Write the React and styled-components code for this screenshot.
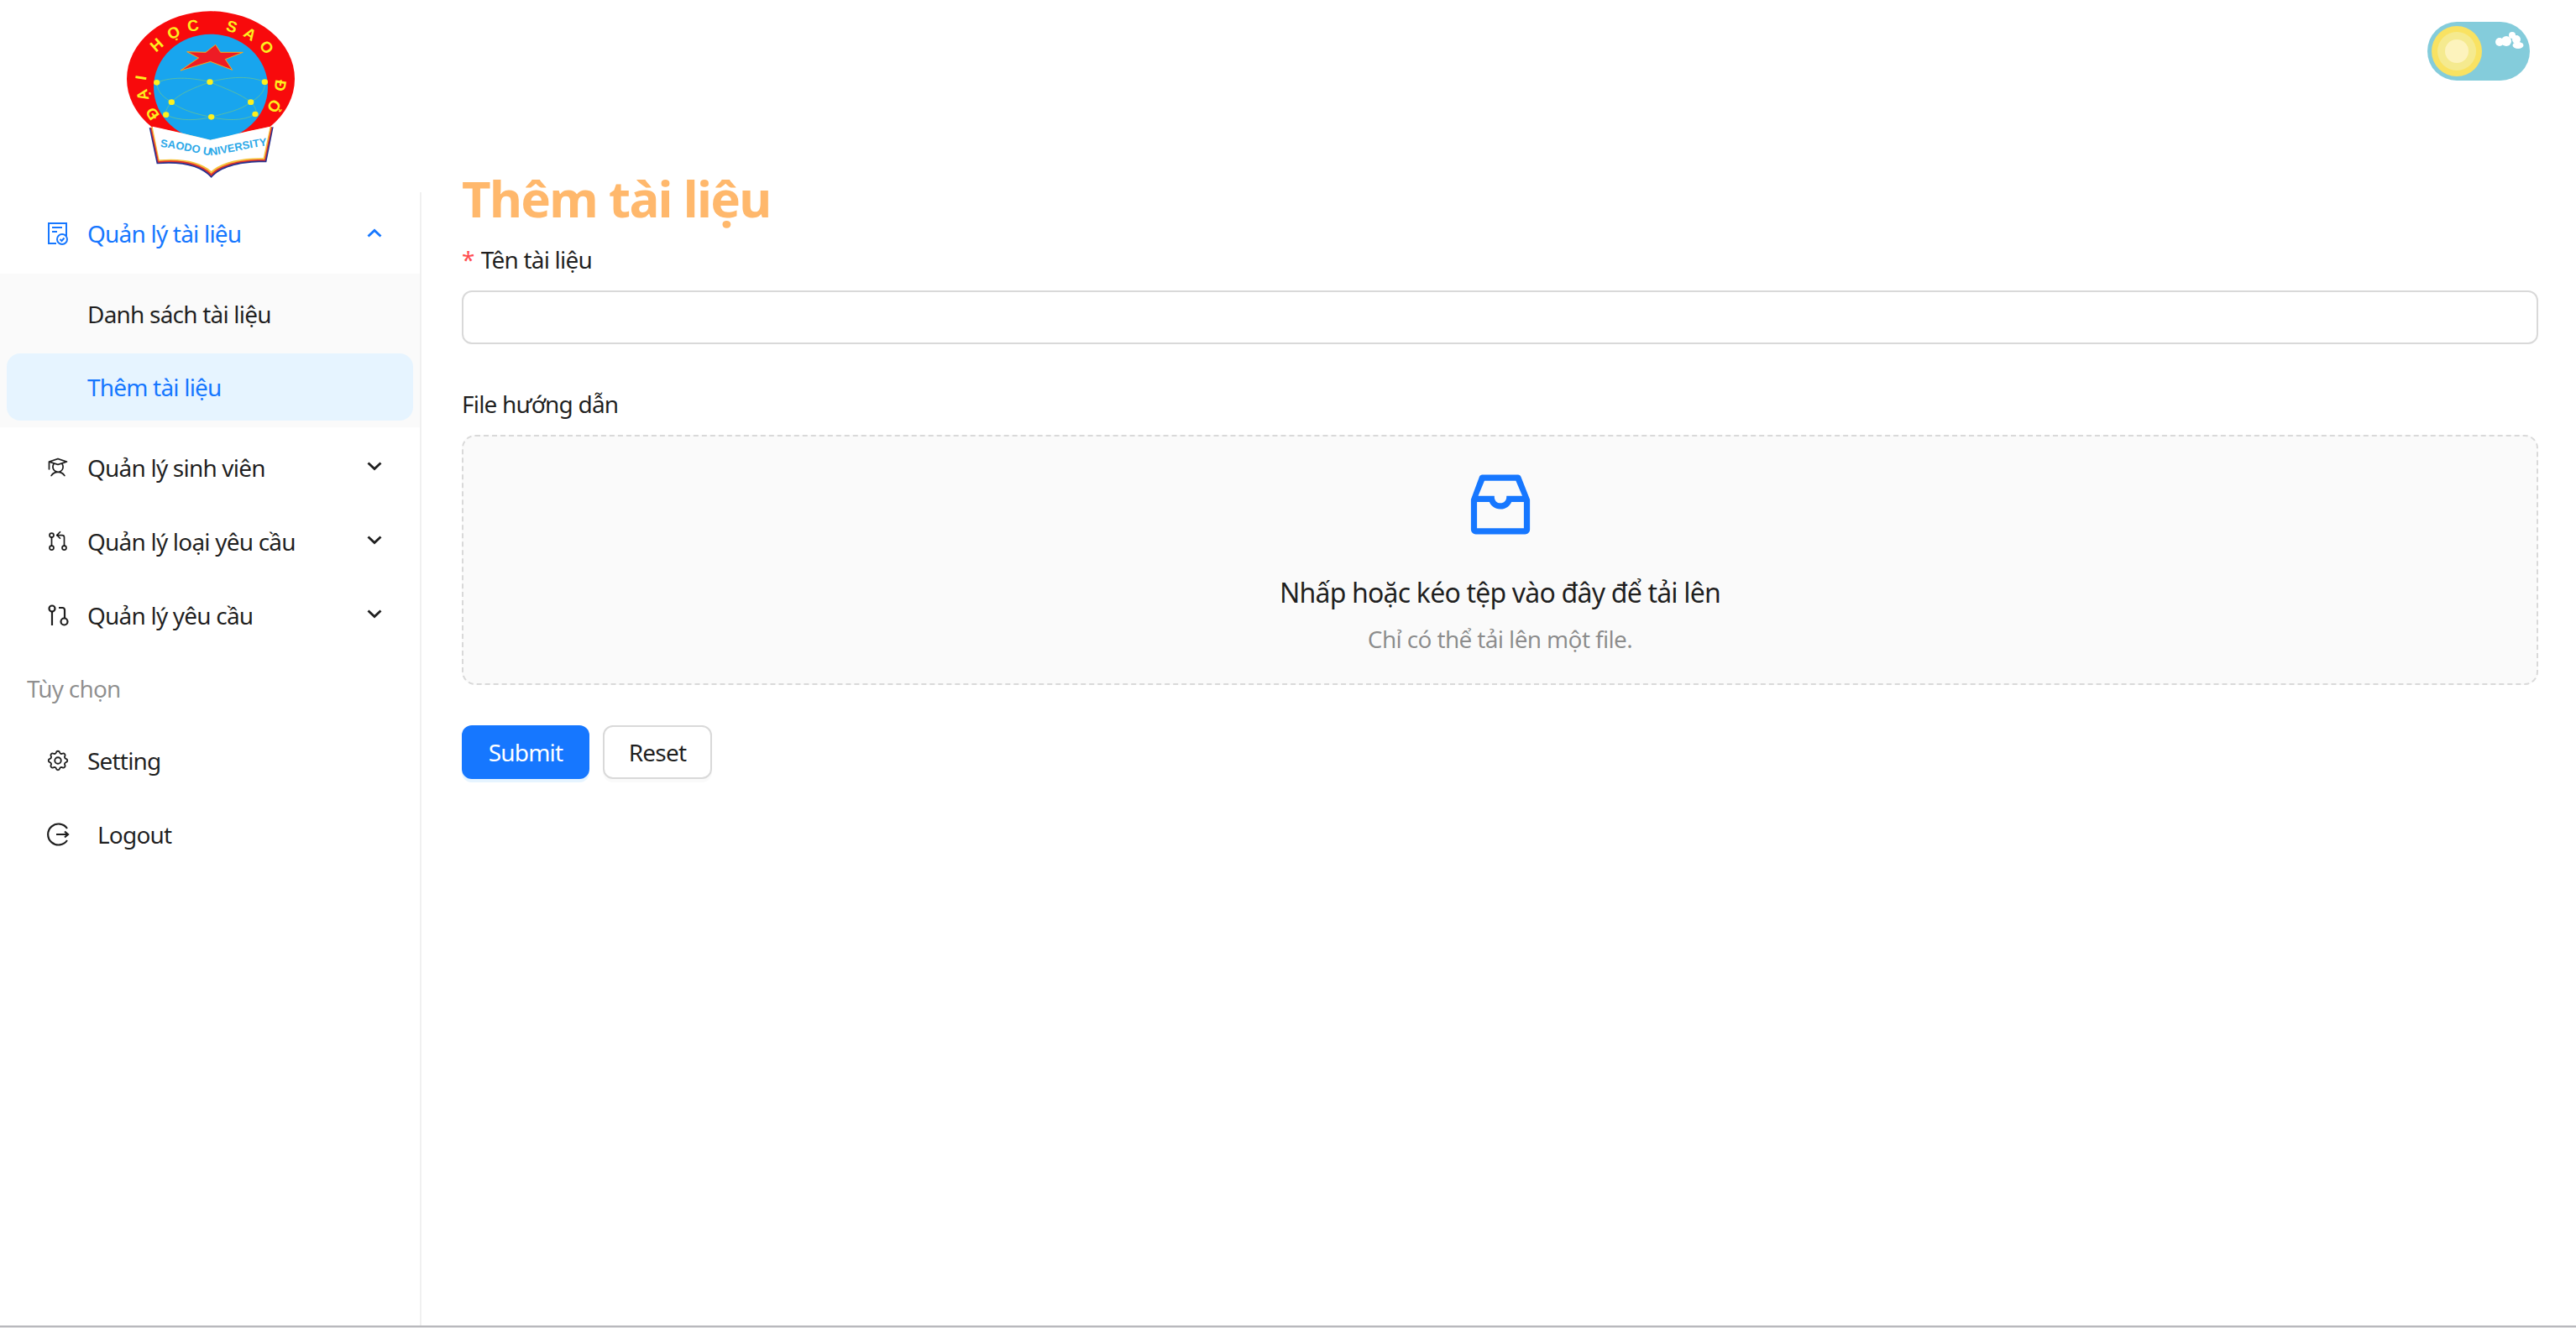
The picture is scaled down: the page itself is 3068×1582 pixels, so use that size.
import styled, { createGlobalStyle } from 'styled-components'
import { AiOutlineInbox } from 'react-icons/ai'
import { PiStudent } from 'react-icons/pi'
import { TbGitPullRequest, TbSettings } from 'react-icons/tb'

const GlobalStyle = createGlobalStyle`
  html, body {
    margin: 0;
    padding: 0;
    background: #fff;
  }
  body {
    font-family: 'Noto Sans', 'Liberation Sans', sans-serif;
    color: rgba(0, 0, 0, 0.88);
  }
  * {
    box-sizing: border-box;
  }
`

const Logo = () => (
  <LogoSvg viewBox='0 0 900 690'>
    <defs>
      <path id='ringPath' d='M274 410 A230 187 0 1 1 593 440' />
      <path id='bookPath' d='M272 525 C340 530 400 548 452 556 C510 548 580 530 642 522' />
    </defs>
    <ellipse cx='453' cy='282' rx='300' ry='242' fill='#f80a0c' />
    <ellipse cx='453' cy='312' rx='204' ry='190' fill='#18a5ee' />
    <g fill='none' stroke='#62c09a' strokeWidth='2.500'>
      <path d='M260 295 C320 270 400 280 450 293 C500 280 580 265 646 293' />
      <path d='M450 293 C390 315 340 335 313 365 C350 395 410 410 455 418 C500 405 560 395 596 365 C560 335 500 315 450 293' />
      <path d='M260 295 C262 335 290 350 313 365 C300 380 290 395 293 410' />
      <path d='M646 293 C650 330 620 350 596 365 C610 380 620 395 612 408' />
      <path d='M293 410 C340 435 410 430 455 418 C500 430 570 435 612 408' />
    </g>
    <polygon
      points='470,160 488,187 568,187 505,212 530,250 452,220 345,252 410,207 368,185 435,187'
      fill='#ee1c25'
      stroke='#f6a81c'
      strokeWidth='3'
    />
    <g fill='#fdf01e'>
      <ellipse cx='260' cy='295' rx='11' ry='10' />
      <ellipse cx='450' cy='293' rx='11' ry='10' />
      <ellipse cx='646' cy='293' rx='11' ry='10' />
      <ellipse cx='313' cy='365' rx='11' ry='10' />
      <ellipse cx='596' cy='365' rx='11' ry='10' />
      <ellipse cx='293' cy='410' rx='11' ry='10' />
      <ellipse cx='455' cy='418' rx='11' ry='10' />
      <ellipse cx='612' cy='408' rx='11' ry='10' />
    </g>
    <text fontFamily='Liberation Sans' fontWeight='700' fontSize='56' fill='#fdf01e' letterSpacing='27' wordSpacing='22'>
      <textPath href='#ringPath'>ĐẠI HỌC SAO ĐỎ</textPath>
    </text>
    <path d='M233 456 C310 470 390 490 452 505 C520 490 600 470 677 454 L652 580 C570 578 490 594 455 636 C420 594 350 578 260 586 Z' fill='#27318f' />
    <path d='M237 455 C310 468 390 488 452 503 C520 488 600 468 673 453 L648 575 C570 573 490 589 455 629 C420 589 350 573 264 581 Z' fill='#e0322c' />
    <path d='M241 454 C310 466 390 486 452 501 C520 486 600 466 669 452 L645 570 C570 568 490 584 455 621 C420 584 350 568 267 576 Z' fill='#f6c23c' />
    <path d='M245 452 C310 465 390 485 452 500 C520 485 600 465 665 452 L641 565 C570 563 490 578 455 612 C420 578 350 563 269 571 Z' fill='#fff' />
    <text fontFamily='Liberation Sans' fontWeight='700' fontSize='39' fill='#2ba8e8'>
      <textPath href='#bookPath'>SAODO UNIVERSITY</textPath>
    </text>
  </LogoSvg>
)

const ThemeToggle = () => (
  <svg width='122' height='70' viewBox='0 0 122 70'>
    <rect width='122' height='70' rx='35' fill='#84ccdb' />
    <circle cx='35' cy='35' r='30' fill='#f9e262' />
    <circle cx='35' cy='35' r='23' fill='#f5ea8f' />
    <circle cx='35' cy='35' r='14' fill='#fdf3bd' />
    <g fill='#fff'>
      <circle cx='86' cy='24' r='5' />
      <circle cx='94' cy='23' r='6' />
      <circle cx='101' cy='16' r='4' />
      <circle cx='106' cy='21' r='5' />
      <ellipse cx='108' cy='28' rx='6.500' ry='4' />
    </g>
  </svg>
)

const DocIcon = () => (
  <svg width='26' height='28' viewBox='0 0 26 28' fill='none' stroke='currentColor' strokeWidth='2'>
    <path d='M11 26H2V2h21v15' />
    <path d='M6 7h12M6 12h6' />
    <circle cx='18' cy='21' r='6' />
    <path d='M15.500 21l2 2 3-3.500' />
  </svg>
)

const RequestIcon = () => (
  <svg width='26' height='26' viewBox='0 0 26 26' fill='none' stroke='currentColor' strokeWidth='2.200'>
    <circle cx='6' cy='5' r='3.500' />
    <path d='M6 8.500V25' />
    <path d='M14 4h4.500a2.500 2.500 0 0 1 2.500 2.500V16' />
    <circle cx='20.500' cy='20.500' r='4' />
  </svg>
)

const LogoutIcon = () => (
  <svg width='28' height='28' viewBox='0 0 28 28' fill='none' stroke='currentColor' strokeWidth='2.200'>
    <path d='M25 7A12.500 12.500 0 1 0 25 21' />
    <path d='M12 14h14M22 10.500l4 3.500-4 3.500' />
  </svg>
)

const Chevron = ({ open }) => (
  <ChevronSvg viewBox='0 0 18 12' fill='none' stroke='currentColor' strokeWidth='2.800' $open={open}>
    <path d='M1.500 2.500L9 9.500l7.500-7' />
  </ChevronSvg>
)

const App = () => {
  return (
    <Page>
      <GlobalStyle />
      <Header>
        <LogoBox>
          <Logo />
        </LogoBox>
        <ThemeToggle />
      </Header>
      <Body>
        <Sider>
          <MenuItem $active>
            <IconSlot><DocIcon /></IconSlot>
            <Label>Quản lý tài liệu</Label>
            <Chevron open />
          </MenuItem>
          <SubMenu>
            <SubItem>Danh sách tài liệu</SubItem>
            <SubItem $selected>Thêm tài liệu</SubItem>
          </SubMenu>
          <MenuItem>
            <IconSlot><PiStudent size={28} /></IconSlot>
            <Label>Quản lý sinh viên</Label>
            <Chevron />
          </MenuItem>
          <MenuItem>
            <IconSlot><TbGitPullRequest size={32} strokeWidth={1.4} /></IconSlot>
            <Label>Quản lý loại yêu cầu</Label>
            <Chevron />
          </MenuItem>
          <MenuItem>
            <IconSlot><RequestIcon /></IconSlot>
            <Label>Quản lý yêu cầu</Label>
            <Chevron />
          </MenuItem>
          <GroupTitle>Tùy chọn</GroupTitle>
          <MenuItem>
            <IconSlot><TbSettings size={34} strokeWidth={1.5} /></IconSlot>
            <Label>Setting</Label>
          </MenuItem>
          <MenuItem>
            <IconSlot><LogoutIcon /></IconSlot>
            <Label $wide>Logout</Label>
          </MenuItem>
        </Sider>
        <Content>
          <Title>Thêm tài liệu</Title>
          <FieldLabel>
            <Required>*</Required>
            Tên tài liệu
          </FieldLabel>
          <TextInput />
          <FieldLabel $spaced>File hướng dẫn</FieldLabel>
          <Dragger>
            <AiOutlineInbox size={96} color='#1677ff' />
            <DragText>Nhấp hoặc kéo tệp vào đây để tải lên</DragText>
            <DragHint>Chỉ có thể tải lên một file.</DragHint>
          </Dragger>
          <Actions>
            <Button $primary>Submit</Button>
            <Button>Reset</Button>
          </Actions>
        </Content>
      </Body>
      <BottomLine />
    </Page>
  )
}

export default App

const Page = styled.div`
  display: flex;
  flex-direction: column;
  width: 3068px;
  height: 1582px;
  overflow: hidden;
`

const Header = styled.header`
  display: flex;
  justify-content: space-between;
  align-items: flex-start;
  height: 229px;
  padding: 26px 55px 0 0;
`

const LogoBox = styled.div`
  display: flex;
  justify-content: center;
  width: 500px;
  margin-top: -26px;
`

const LogoSvg = styled.svg`
  width: 300px;
  height: 230px;
`

const Body = styled.div`
  display: flex;
  flex: 1;
  min-height: 0;
`

const Sider = styled.aside`
  flex: none;
  width: 502px;
  padding-top: 9px;
  border-right: 2px solid #f0f0f0;
`

const MenuItem = styled.div`
  display: flex;
  align-items: center;
  height: 80px;
  margin-bottom: 8px;
  padding-left: 54px;
  font-size: 28px;
  letter-spacing: -0.8px;
  color: ${props => (props.$active ? '#1677ff' : 'rgba(0, 0, 0, 0.88)')};
`

const IconSlot = styled.span`
  display: flex;
  justify-content: center;
  width: 30px;
  margin-right: 20px;
`

const Label = styled.span`
  flex: 1;
  margin-left: ${props => (props.$wide ? '12px' : '0')};
`

const ChevronSvg = styled.svg`
  width: 18px;
  height: 12px;
  margin-right: 45px;
  margin-top: ${props => (props.$open ? '0' : '-4px')};
  transform: ${props => (props.$open ? 'rotate(180deg)' : 'none')};
`

const SubMenu = styled.div`
  display: flex;
  flex-direction: column;
  gap: 7px;
  margin-bottom: 8px;
  padding: 8px;
  background: #fafafa;
`

const SubItem = styled.div`
  display: flex;
  align-items: center;
  height: 80px;
  padding-left: 96px;
  border-radius: 16px;
  font-size: 28px;
  letter-spacing: -0.8px;
  background: ${props => (props.$selected ? '#e6f4ff' : 'transparent')};
  color: ${props => (props.$selected ? '#1677ff' : 'rgba(0, 0, 0, 0.88)')};
`

const GroupTitle = styled.div`
  display: flex;
  align-items: center;
  height: 77px;
  margin-bottom: 8px;
  padding-left: 32px;
  font-size: 28px;
  letter-spacing: -0.8px;
  color: rgba(0, 0, 0, 0.45);
`

const Content = styled.main`
  flex: 1;
  padding: 0 45px 0 48px;
`

const Title = styled.h1`
  height: 74px;
  margin: -30px 0 14px;
  font-size: 60px;
  line-height: 74px;
  font-weight: 700;
  letter-spacing: -1.7px;
  color: #ffb86c;
`

const FieldLabel = styled.label`
  display: flex;
  align-items: center;
  height: 44px;
  margin-top: ${props => (props.$spaced ? '49px' : '0')};
  margin-bottom: 15px;
  font-size: 28px;
  letter-spacing: -0.8px;
`

const Required = styled.span`
  margin-right: 8px;
  color: #ff4d4f;
  font-size: 28px;
`

const TextInput = styled.input`
  display: block;
  width: 100%;
  height: 64px;
  border: 2px solid #d9d9d9;
  border-radius: 12px;
  background: #fff;
`

const Dragger = styled.div`
  display: flex;
  flex-direction: column;
  align-items: center;
  height: 298px;
  padding-top: 33px;
  border: 2px dashed #d9d9d9;
  border-radius: 16px;
  background: #fafafa;
`

const DragText = styled.p`
  margin: 35px 0 0;
  font-size: 32px;
  line-height: 44px;
  letter-spacing: -0.8px;
`

const DragHint = styled.p`
  margin: 11px 0 0;
  font-size: 28px;
  line-height: 44px;
  letter-spacing: -0.65px;
  color: rgba(0, 0, 0, 0.45);
`

const Actions = styled.div`
  display: flex;
  gap: 16px;
  margin-top: 48px;
`

const Button = styled.button`
  width: ${props => (props.$primary ? '152px' : '130px')};
  height: 64px;
  padding: 0;
  border: ${props => (props.$primary ? 'none' : '2px solid #d9d9d9')};
  border-radius: 12px;
  font-family: inherit;
  font-size: 28px;
  letter-spacing: -0.8px;
  background: ${props => (props.$primary ? '#1677ff' : '#fff')};
  color: ${props => (props.$primary ? '#fff' : 'rgba(0, 0, 0, 0.88)')};
  box-shadow: 0 4px 0 ${props => (props.$primary ? 'rgba(5, 145, 255, 0.1)' : 'rgba(0, 0, 0, 0.02)')};
`

const BottomLine = styled.div`
  flex: none;
  height: 3px;
  border-top: 2px solid #b9b9bd;
  background: #e4e4e6;
`
